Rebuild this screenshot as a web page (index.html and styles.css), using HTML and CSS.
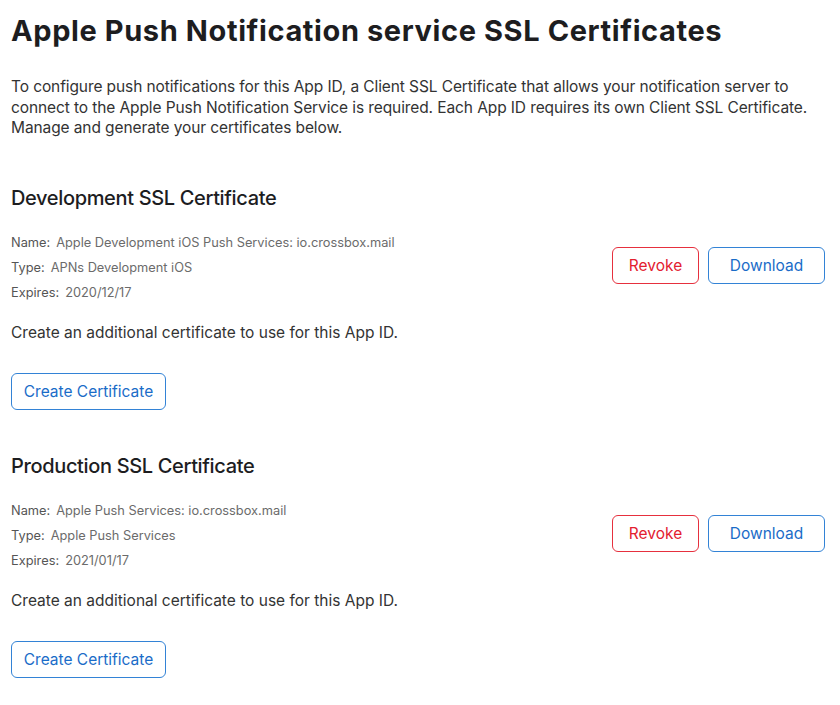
FILE: index.html
```html
<!DOCTYPE html>
<html lang="en">
<head>
    <meta charset="UTF-8">
    <title>Apple Push Notification service SSL Certificates</title>
    <link rel="stylesheet" href="styles.css">
</head>
<body>
    <div class="page">
        <h1 class="title">Apple Push Notification service SSL Certificates</h1>
        <p class="intro">To configure push notifications for this App ID, a Client SSL Certificate that allows your notification server to connect to the Apple Push Notification Service is required. Each App ID requires its own Client SSL Certificate. Manage and generate your certificates below.</p>

        <!-- Development -->
        <div class="cert-section">
            <h2 class="cert-title">Development SSL Certificate</h2>
            <div class="cert-row">
                <dl class="cert-info">
                    <div class="info-line"><dt>Name:</dt><dd>Apple Development iOS Push Services: io.crossbox.mail</dd></div>
                    <div class="info-line"><dt>Type:</dt><dd>APNs Development iOS</dd></div>
                    <div class="info-line"><dt>Expires:</dt><dd>2020/12/17</dd></div>
                </dl>
                <div class="cert-actions">
                    <button class="btn btn-revoke">Revoke</button>
                    <button class="btn btn-download">Download</button>
                </div>
            </div>
            <p class="create-text">Create an additional certificate to use for this App ID.</p>
            <button class="btn btn-create">Create Certificate</button>
        </div>

        <!-- Production -->
        <div class="cert-section">
            <h2 class="cert-title">Production SSL Certificate</h2>
            <div class="cert-row">
                <dl class="cert-info">
                    <div class="info-line"><dt>Name:</dt><dd>Apple Push Services: io.crossbox.mail</dd></div>
                    <div class="info-line"><dt>Type:</dt><dd>Apple Push Services</dd></div>
                    <div class="info-line"><dt>Expires:</dt><dd>2021/01/17</dd></div>
                </dl>
                <div class="cert-actions">
                    <button class="btn btn-revoke">Revoke</button>
                    <button class="btn btn-download">Download</button>
                </div>
            </div>
            <p class="create-text">Create an additional certificate to use for this App ID.</p>
            <button class="btn btn-create">Create Certificate</button>
        </div>
    </div>
</body>
</html>
```

FILE: styles.css
```css
body {
    margin: 0;
    background-color: #fff;
    font-family: Inter, "Noto Sans", sans-serif;
    color: #1d1d1f;
}

.page {
    padding: 12px 15px 0 11px;
}

.title {
    margin: 0;
    font-size: 29px;
    line-height: 38px;
    font-weight: 700;
    letter-spacing: 0.6px;
}

.intro {
    margin: 27px 0 0;
    font-size: 15.5px;
    line-height: 20.5px;
    color: #333;
    letter-spacing: -0.1px;
}

.cert-section {
    margin-top: 45px;
}

.cert-section + .cert-section {
    margin-top: 42px;
}

.cert-title {
    margin: 0;
    font-size: 20px;
    line-height: 28px;
    font-weight: 500;
    letter-spacing: -0.35px;
}

.cert-row {
    display: flex;
    justify-content: space-between;
    align-items: center;
    margin-top: 18px;
}

.cert-info {
    margin: 0;
    font-size: 12.8px;
    line-height: 25px;
    color: #6b6b6b;
}

.info-line {
    display: flex;
    gap: 6px;
}

.info-line dt {
    margin: 0;
    color: #555;
}

.info-line dd {
    margin: 0;
}

.cert-actions {
    display: flex;
    gap: 9px;
    margin-bottom: 3px;
}

/* Outline buttons */
.btn {
    font-family: inherit;
    font-size: 15.5px;
    background: #fff;
    border: 1.5px solid #3383d6;
    border-radius: 6px;
    color: #1a6cc8;
    height: 37px;
    padding: 0;
    cursor: pointer;
}

.btn-revoke {
    border-color: #e6303e;
    color: #e3202f;
    width: 87px;
}

.btn-download {
    width: 117px;
}

.create-text {
    margin: 18px 0 0;
    font-size: 15.5px;
    line-height: 20px;
    color: #333;
}

.btn-create {
    margin-top: 30px;
    width: 155px;
}
```
